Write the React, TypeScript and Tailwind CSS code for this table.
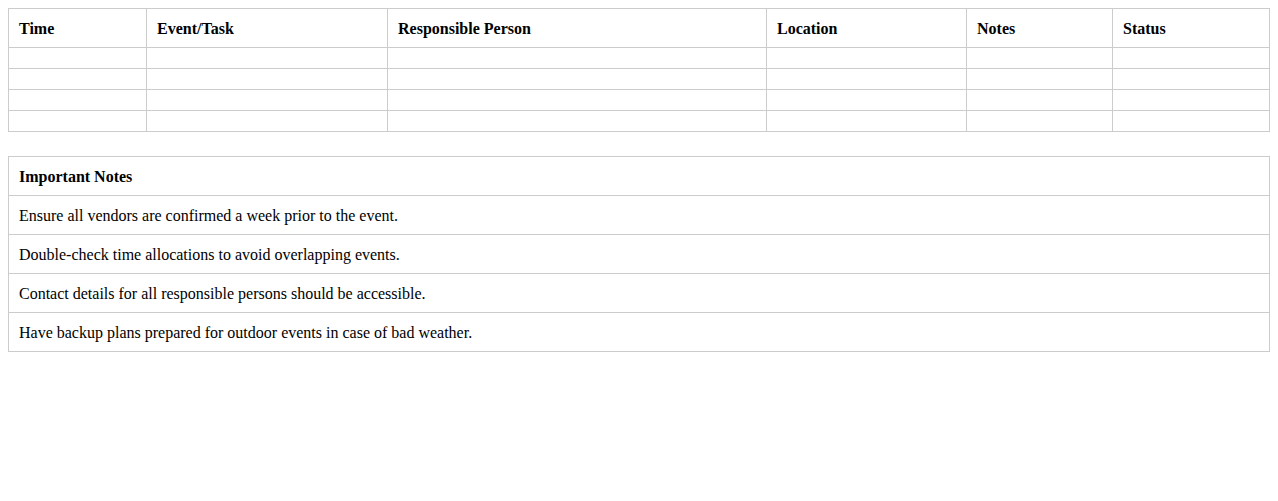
const columns = [
  { label: 'Time', width: 'w-[138px]' },
  { label: 'Event/Task', width: 'w-[241px]' },
  { label: 'Responsible Person', width: 'w-[379px]' },
  { label: 'Location', width: 'w-[200px]' },
  { label: 'Notes', width: 'w-[146px]' },
  { label: 'Status', width: 'w-[157px]' },
];

const notes = [
  'Ensure all vendors are confirmed a week prior to the event.',
  'Double-check time allocations to avoid overlapping events.',
  'Contact details for all responsible persons should be accessible.',
  'Have backup plans prepared for outdoor events in case of bad weather.',
];

const cell = 'border border-[#cccccc] px-[10px] text-left align-middle';
const textCell = 'pt-[11px] pb-[9px]';

const App = () => {
  return (
    <div className="m-2 font-['Liberation_Serif',serif] text-base leading-[18px] text-black">
      {/* Schedule */}
      <table className="w-full table-fixed border-collapse mb-6">
        <colgroup>
          {columns.map((c) => (
            <col key={c.label} className={c.width} />
          ))}
        </colgroup>
        <thead>
          <tr>
            {columns.map((c) => (
              <th key={c.label} className={cn(cell, textCell, 'font-bold')}>
                {c.label}
              </th>
            ))}
          </tr>
        </thead>
        <tbody>
          {[0, 1, 2, 3].map((r) => (
            <tr key={r}>
              {columns.map((c) => (
                <td key={c.label} className={cn(cell, 'h-[21px] py-0')}></td>
              ))}
            </tr>
          ))}
        </tbody>
      </table>

      {/* Notes */}
      <table className="w-full border-collapse">
        <thead>
          <tr>
            <th className={cn(cell, textCell, 'font-bold')}>Important Notes</th>
          </tr>
        </thead>
        <tbody>
          {notes.map((n) => (
            <tr key={n}>
              <td className={cn(cell, textCell)}>{n}</td>
            </tr>
          ))}
        </tbody>
      </table>
    </div>
  );
};

function cn(...parts: string[]) {
  return parts.join(' ');
}

export default App;
